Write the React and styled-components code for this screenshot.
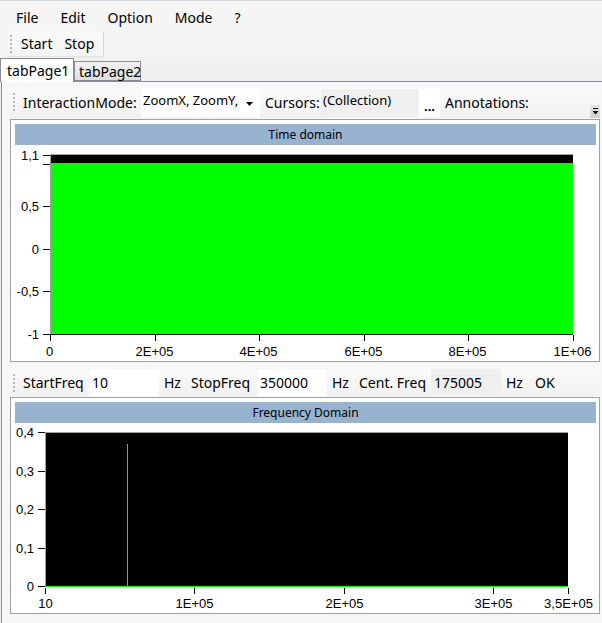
import React from 'react';
import styled, { createGlobalStyle } from 'styled-components';

const ui = `"Noto Sans", "Open Sans", "DejaVu Sans", sans-serif`;
const chartFont = `"Liberation Sans", Arial, sans-serif`;

const GlobalStyle = createGlobalStyle`
  * { box-sizing: border-box; }
  html, body {
    margin: 0;
    padding: 0;
    background: #f0f0f0;
  }
  body {
    font-family: ${ui};
    font-size: 14px;
    color: #000;
  }
`;

const Window = styled.div`
  width: 602px;
  height: 623px;
  overflow: hidden;
  display: flex;
  flex-direction: column;
  background: #f0f0f0;
`;

const MenuBar = styled.div`
  height: 31px;
  border-top: 1px solid #d3d9e2;
  padding: 4px 0 0 5px;
  display: flex;
  align-items: center;
  background: #f5f5f5;
`;

const MenuItem = styled.span`
  padding: 0 11px;
  line-height: 20px;
`;

const ToolRow = styled.div`
  height: 26px;
  padding-left: 8px;
  display: flex;
  background: #f5f5f5;
`;

const MainStrip = styled.div`
  display: flex;
  align-items: center;
  padding: 1px 3px 0 2px;
  background: linear-gradient(#fafafa, #f3f3f3);
  border-right: 1px solid #d6d6d6;
  border-bottom: 1px solid #e2e2e2;
  border-top-right-radius: 3px;
`;

const Grip = styled.span`
  width: 2px;
  height: ${({ $h }) => $h}px;
  margin-right: 3px;
  background-image: linear-gradient(#b4b4b4 50%, transparent 50%);
  background-size: 2px 4px;
`;

const ToolButton = styled.span`
  padding: 0 ${({ $pad }) => $pad || 6}px;
  line-height: 20px;
`;

const TabStrip = styled.div`
  height: 24px;
  display: flex;
  align-items: flex-end;
  position: relative;
  z-index: 1;
  background: #f0f0f0;
`;

const Tab = styled.div`
  width: ${({ $active }) => ($active ? 74 : 67)}px;
  height: ${({ $active }) => ($active ? 24 : 20)}px;
  margin-bottom: ${({ $active }) => ($active ? -1 : 0)}px;
  padding-left: ${({ $active }) => ($active ? 6 : 4)}px;
  border: 1px solid #898c95;
  border-bottom: ${({ $active }) => ($active ? 'none' : '1px solid #898c95')};
  background: ${({ $active }) => ($active ? '#ffffff' : 'linear-gradient(#f2f2f2, #dedede)')};
  display: flex;
  align-items: center;
  line-height: 18px;
  padding-top: ${({ $active }) => ($active ? 0 : 1)}px;
`;

const TabPage = styled.div`
  flex: 1;
  margin-left: 1px;
  border-top: 1px solid #898c95;
  border-left: 1px solid #898c95;
  background: #f7f7f7;
  padding: 6px 2px 0 8px;
  display: flex;
  flex-direction: column;
`;

const Strip = styled.div`
  height: ${({ $h }) => $h}px;
  margin-top: ${({ $top }) => $top || 0}px;
  margin-bottom: 1px;
  padding-left: 3px;
  display: flex;
  align-items: center;
  background: linear-gradient(#fbfbfb, #f1f1f1);
`;

const Label = styled.span`
  width: ${({ $w }) => ($w ? `${$w}px` : 'auto')};
  flex-shrink: 0;
  padding: 0 5px;
  white-space: nowrap;
  line-height: 20px;
`;

const Combo = styled.div`
  width: 119px;
  height: 28px;
  background: #fff;
  display: flex;
  font-size: 13px;
`;

const ComboText = styled.span`
  flex: 1;
  padding: 2px 0 0 2px;
  white-space: nowrap;
  overflow: hidden;
`;

const ComboArrow = styled.span`
  width: 21px;
  display: flex;
  align-items: center;
  justify-content: center;
  padding-top: 2px;
`;

const TextBox = styled.div`
  width: ${({ $w }) => $w}px;
  height: ${({ $h }) => $h || 100}%;
  background: ${({ $readonly }) => ($readonly ? '#efefef' : '#ffffff')};
  font-size: ${({ $small }) => ($small ? 13 : 14)}px;
  padding: ${({ $small }) => ($small ? '2px 0 0 2px' : '0 0 0 3px')};
  display: flex;
  align-items: ${({ $small }) => ($small ? 'flex-start' : 'center')};
  white-space: nowrap;
`;

const EllipsisButton = styled.div`
  width: 21px;
  height: 28px;
  background: #fff;
  display: flex;
  align-items: flex-end;
  justify-content: center;
  font-weight: bold;
  font-size: 13px;
  line-height: 20px;
  padding-bottom: 1px;
`;

const Spacer = styled.span`
  flex: 1;
`;

const Overflow = styled.div`
  align-self: flex-end;
  width: 10px;
  height: 13px;
  background: linear-gradient(#e6e6e6, #cfcfcf);
  display: flex;
  align-items: center;
  justify-content: center;
`;

const ChartPanel = styled.div`
  height: ${({ $h }) => $h}px;
  border: 1px solid #a0a0a0;
  background: #fff;
  display: flex;
  flex-direction: column;
`;

const TitleWrap = styled.div`
  padding: 4px 3px 0 4px;
`;

const TitleBar = styled.div`
  height: 21px;
  background: #97b3d0;
  font-size: 12px;
  line-height: 21px;
  text-align: center;
`;

const Plot = styled.svg`
  display: block;
  font-family: ${chartFont};
  font-size: 13px;
`;

const timeY = [
  { v: 1.1, label: '1,1' },
  { v: 1, label: '' },
  { v: 0.5, label: '0,5' },
  { v: 0, label: '0' },
  { v: -0.5, label: '-0,5' },
  { v: -1, label: '-1' },
];
const timeX = ['0', '2E+05', '4E+05', '6E+05', '8E+05', '1E+06'];

const TimeChart = () => {
  const left = 39;
  const width = 523;
  const top = 10;
  const bottom = 189;
  const yOf = (v) => bottom - ((v + 1) / 2.1) * (bottom - top);
  return (
    <Plot width="588" height="216">
      <rect x={left} y={top} width={width} height={bottom - top} fill="#00ff00" />
      <rect x={left} y={top} width={width} height="8" fill="#000" />
      <line x1={left + 0.5} y1={top} x2={left + 0.5} y2={bottom} stroke="#a0a0a0" />
      <line x1={left} y1={top - 0.5} x2={left + width} y2={top - 0.5} stroke="#a0a0a0" />
      <line x1={left} y1={bottom + 0.5} x2={left + width} y2={bottom + 0.5} stroke="#000" />
      {timeY.map((t) => {
        const y = Math.round(yOf(t.v)) + 0.5;
        return (
          <g key={t.v}>
            <line x1={32} y1={y} x2={left} y2={y} stroke="#000" />
            {t.label && (
              <text x={28} y={y + 4.5} textAnchor="end">{t.label}</text>
            )}
          </g>
        );
      })}
      {timeX.map((label, i) => {
        const x = Math.round(left + (width * i) / 5) + 0.5;
        return (
          <g key={label}>
            <line x1={x} y1={bottom + 1} x2={x} y2={bottom + 7} stroke="#000" />
            <text x={x - 1} y={211} textAnchor="middle">{label}</text>
          </g>
        );
      })}
    </Plot>
  );
};

const freqY = [
  { v: 0.4, label: '0,4' },
  { v: 0.3, label: '0,3' },
  { v: 0.2, label: '0,2' },
  { v: 0.1, label: '0,1' },
  { v: 0, label: '0' },
];
const freqX = [
  { f: 10, label: '10' },
  { f: 100000, label: '1E+05' },
  { f: 200000, label: '2E+05' },
  { f: 300000, label: '3E+05' },
  { f: 350000, label: '3,5E+05' },
];

const FreqChart = () => {
  const left = 34;
  const width = 523;
  const top = 10;
  const bottom = 164;
  const yOf = (v) => bottom - (v / 0.4) * (bottom - top);
  const xOf = (f) => left + ((f - 10) / (350000 - 10)) * width;
  const spikeX = 116.5;
  return (
    <Plot width="588" height="190">
      <rect x={left} y={top} width={width} height={bottom - top} fill="#000" />
      <line x1={left + 0.5} y1={top} x2={left + 0.5} y2={bottom} stroke="#a0a0a0" />
      <line x1={left} y1={top - 0.5} x2={left + width} y2={top - 0.5} stroke="#a0a0a0" />
      <line x1={left} y1={bottom - 0.5} x2={left + width} y2={bottom - 0.5} stroke="#00ff00" />
      <line x1={spikeX} y1={21} x2={spikeX} y2={bottom} stroke="#00ff00" />
      {freqY.map((t) => {
        const y = Math.round(yOf(t.v)) - 0.5;
        return (
          <g key={t.v}>
            <line x1={27} y1={y} x2={left} y2={y} stroke="#000" />
            <text x={23} y={y + 4.5} textAnchor="end">{t.label}</text>
          </g>
        );
      })}
      {freqX.map((t) => {
        const x = Math.round(xOf(t.f)) + 0.5;
        return (
          <g key={t.f}>
            <line x1={x} y1={bottom + 1} x2={x} y2={bottom + 7} stroke="#000" />
            <text x={x} y={185} textAnchor="middle">{t.label}</text>
          </g>
        );
      })}
    </Plot>
  );
};

const ArrowDown = () => (
  <svg width="7" height="4" viewBox="0 0 7 4">
    <path d="M0 0h7L3.5 4z" fill="#000" />
  </svg>
);

const OverflowGlyph = () => (
  <svg width="7" height="7" viewBox="0 0 7 7">
    <rect x="1" y="0" width="5" height="1" fill="#000" />
    <path d="M0.5 3h6L3.5 6.5z" fill="#000" />
  </svg>
);

const App = () => (
  <Window>
    <GlobalStyle />
    <MenuBar>
      <MenuItem>File</MenuItem>
      <MenuItem>Edit</MenuItem>
      <MenuItem>Option</MenuItem>
      <MenuItem>Mode</MenuItem>
      <MenuItem>?</MenuItem>
    </MenuBar>
    <ToolRow>
      <MainStrip>
        <Grip $h={18} />
        <ToolButton>Start</ToolButton>
        <ToolButton>Stop</ToolButton>
      </MainStrip>
    </ToolRow>
    <TabStrip>
      <Tab $active>tabPage1</Tab>
      <Tab>tabPage2</Tab>
    </TabStrip>
    <TabPage>
      <Strip $h={30}>
        <Grip $h={20} />
        <Label $w={123}>InteractionMode:</Label>
        <Combo>
          <ComboText>ZoomX, ZoomY,</ComboText>
          <ComboArrow>
            <ArrowDown />
          </ComboArrow>
        </Combo>
        <Label $w={61}>Cursors:</Label>
        <TextBox $w={98} $h={93} $readonly $small>(Collection)</TextBox>
        <EllipsisButton>...</EllipsisButton>
        <Label>Annotations:</Label>
        <Spacer />
        <Overflow>
          <OverflowGlyph />
        </Overflow>
      </Strip>
      <ChartPanel $h={243}>
        <TitleWrap>
          <TitleBar>Time domain</TitleBar>
        </TitleWrap>
        <TimeChart />
      </ChartPanel>
      <Strip $h={27} $top={7}>
        <Grip $h={18} />
        <Label $w={71}>StartFreq</Label>
        <TextBox $w={70}>10</TextBox>
        <Label $w={27}>Hz</Label>
        <Label $w={71}>StopFreq</Label>
        <TextBox $w={70}>350000</TextBox>
        <Label $w={27}>Hz</Label>
        <Label $w={77}>Cent. Freq</Label>
        <TextBox $w={70} $readonly>175005</TextBox>
        <Label $w={27}>Hz</Label>
        <ToolButton $pad={7}>OK</ToolButton>
      </Strip>
      <ChartPanel $h={217}>
        <TitleWrap>
          <TitleBar>Frequency Domain</TitleBar>
        </TitleWrap>
        <FreqChart />
      </ChartPanel>
    </TabPage>
  </Window>
);

export default App;
